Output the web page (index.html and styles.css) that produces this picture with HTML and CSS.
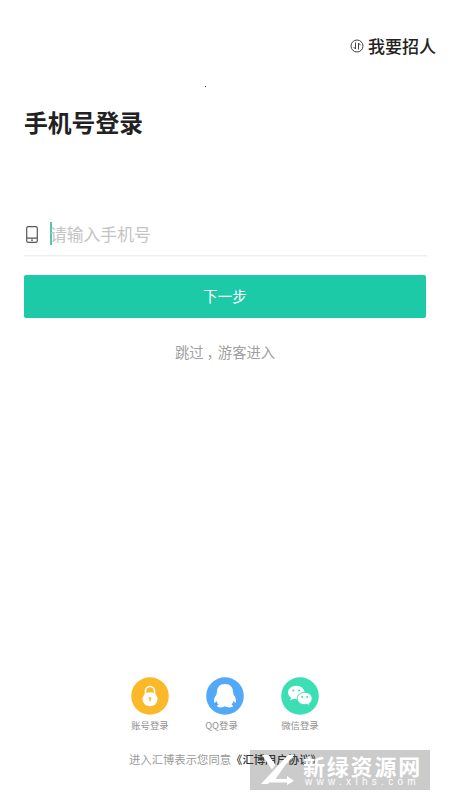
FILE: index.html
```html
<!DOCTYPE html>
<html lang="zh-CN">
<head>
<meta charset="utf-8">
<title>手机号登录</title>
<link rel="stylesheet" href="styles.css">
</head>
<body>
<main class="screen">
  <header class="topbar">
    <svg class="switch-icon" viewBox="0 0 14 14" fill="none" stroke="#444" stroke-width="1"><circle cx="7" cy="7" r="6"/><path d="M5.500 3.500v6.500L3.500 8M8.500 10.500V4l2 2.200"/></svg>
    <span>我要招人</span>
  </header>
  <i class="speck"></i>
  <h1 class="title">手机号登录</h1>
  <div class="field">
    <svg class="phone-icon" viewBox="0 0 12 17" fill="none" stroke="#555" stroke-width="1.2"><rect x=".7" y=".7" width="10.6" height="15.6" rx="1.6"/><path d="M1 12.1h10M5 14.2h2"/></svg>
    <i class="caret"></i>
    <span class="placeholder">请输入手机号</span>
  </div>
  <button class="next">下一步</button>
  <a class="skip">跳过<span class="comma">，</span>游客进入</a>
  <footer class="footer">
    <div class="methods">
      <div class="method">
        <svg viewBox="0 0 38 38"><circle cx="19" cy="19" r="18.8" fill="#fbb829"/><path d="M14.500 17v-3a4.500 4.500 0 0 1 9 0v3" fill="none" stroke="#fff" stroke-width="1.600"/><ellipse cx="19" cy="22.300" rx="7.500" ry="7" fill="#fff"/><circle cx="19" cy="21.300" r="1.200" fill="#fbb829"/><path d="M18.400 21.500h1.200v3h-1.200z" fill="#fbb829"/></svg>
        <span>账号登录</span>
      </div>
      <div class="method method-qq">
        <svg viewBox="0 0 38 38"><circle cx="19" cy="19" r="18.8" fill="#51a9f7"/><path d="M19 7c-5.300 0-8 3.500-8 8-.2 1-.7 1.700-.5 2.800-1.700 2-3 4.700-2.500 7.200.4 1.500 1.600.2 2.500-1 .3 1.400 1 2.600 2 3.500-1.500.8-2 2-.7 2.600 2 .7 5.500.4 7.200-.8 1.700 1.200 5.200 1.500 7.200.8 1.300-.6.8-1.800-.7-2.600 1-.9 1.700-2.100 2-3.500.9 1.200 2.100 2.500 2.500 1 .5-2.500-.8-5.200-2.500-7.200.2-1.100-.3-1.800-.5-2.800 0-4.500-2.700-8-8-8z" fill="#fff"/></svg>
        <span>QQ登录</span>
      </div>
      <div class="method">
        <svg viewBox="0 0 38 38"><circle cx="19" cy="19" r="18.8" fill="#3bdfb3"/><path d="M15.300 8.700c-4.600 0-8.300 3-8.300 6.700 0 2.200 1.200 4.100 3.100 5.300l-.8 2.700 3-1.600c1 .3 2 .4 3 .4 4.600 0 8.300-3 8.300-6.800s-3.700-6.700-8.300-6.700z" fill="#fff"/><path d="M23.700 15.300c-4.200 0-7.500 2.700-7.500 6.200s3.300 6.200 7.500 6.200c.9 0 1.700-.1 2.500-.3l2.900 1.500-.7-2.500c1.700-1.200 2.800-2.900 2.800-4.900 0-3.500-3.300-6.200-7.500-6.200z" fill="#fff" stroke="#3bdfb3" stroke-width="1"/><g fill="#3bdfb3"><circle cx="12.400" cy="13.500" r="1.100"/><circle cx="18.300" cy="13.500" r="1.100"/><circle cx="21.200" cy="20" r="1"/><circle cx="26.200" cy="20" r="1"/></g></svg>
        <span>微信登录</span>
      </div>
    </div>
    <p class="terms">进入汇博表示您同意<b>《汇博用户协议》</b></p>
  </footer>
  <div class="watermark">
    <svg class="mark" viewBox="0 0 36 32"><path d="M2 1h6.500l7 10-3.500 4.500zM28 1h6.500L8 30H1zM25 11.500L15.500 25H27v-3l7 4.700-7 4.300v-2.500H9z" fill="#fff"/></svg>
    <div class="mark-text">
      <span class="mark-name">新绿资源网</span>
      <span class="mark-url">www.xlhs.com</span>
    </div>
  </div>
</main>
</body>
</html>
```

FILE: styles.css
```css
* { box-sizing: border-box; }
body {
  margin: 0;
  background: #fff;
  font-family: "Noto Sans CJK SC", sans-serif;
}
.screen {
  position: relative;
  display: flex;
  flex-direction: column;
  height: 800px;
  padding: 33px 24px 0;
  overflow: hidden;
}
.topbar {
  display: flex;
  justify-content: flex-end;
  align-items: center;
  gap: 4px;
  height: 25px;
  margin-right: -10px;
  font-size: 17px;
  font-weight: 500;
  line-height: 25px;
  color: #222;
}
.switch-icon { width: 14px; height: 14px; }
.speck {
  position: absolute;
  left: 205px;
  top: 86px;
  width: 1px;
  height: 1px;
  background: #333;
}
.title {
  margin: 46px 0 0;
  font-size: 23.8px;
  font-weight: 700;
  line-height: 36px;
  color: #222;
}
.field {
  display: flex;
  align-items: center;
  height: 44px;
  margin-top: 72px;
  width: 403px;
  border-bottom: 1px solid #eee;
  box-shadow: 0 1px #f8f8f8;
}
.phone-icon { width: 12px; height: 17px; margin: 2px 0 0 2px; }
.caret {
  width: 2px;
  height: 23px;
  margin-left: 12px;
  background: #55c5ae;
}
.placeholder {
  margin-left: -2px;
  font-size: 16.8px;
  line-height: 24px;
  color: #c4c4c4;
}
.next {
  width: 402px;
  height: 43px;
  margin-top: 19px;
  padding: 0 0 1px;
  border: 0;
  border-radius: 2px;
  background: #1dcaa7;
  color: #fff;
  font: 14.6px/42px "Noto Sans CJK SC", sans-serif;
}
.skip {
  margin-top: 24px;
  font-size: 14.3px;
  line-height: 20px;
  text-align: center;
  color: #a0a0a0;
}
.comma { display: inline-block; transform: translateX(3px); }
.footer { margin-top: 315px; }
.methods {
  display: flex;
  justify-content: center;
  gap: 37px;
}
.method {
  display: flex;
  flex-direction: column;
  align-items: center;
  width: 38px;
  font-size: 9.4px;
  line-height: 14px;
  white-space: nowrap;
  color: #909090;
}
.method svg { width: 38px; height: 38px; margin-bottom: 3px; }
.method-qq span { margin-left: -7px; }
.terms {
  position: relative;
  z-index: 1;
  margin: 18px 0 0 105px;
  font-size: 11.35px;
  line-height: 18px;
  white-space: nowrap;
  color: #999;
}
.terms b { font-weight: 500; color: #333; }
.watermark {
  position: absolute;
  left: 250px;
  top: 750px;
  display: flex;
  width: 180px;
  height: 40px;
  padding: 4px 0 0 10px;
  background: #cbcbcb;
  color: #fff;
}
.mark, .mark-text { position: relative; z-index: 2; }
.mark { width: 36px; height: 32px; }
.mark-text {
  display: flex;
  flex-direction: column;
  margin-left: 7px;
  white-space: nowrap;
}
.mark-name {
  font-size: 22px;
  font-weight: 700;
  line-height: 22px;
  letter-spacing: 1.8px;
}
.mark-url {
  margin: 1px 0 0 2px;
  font: 10px/10px "Liberation Sans", sans-serif;
  letter-spacing: 4.3px;
}
```
